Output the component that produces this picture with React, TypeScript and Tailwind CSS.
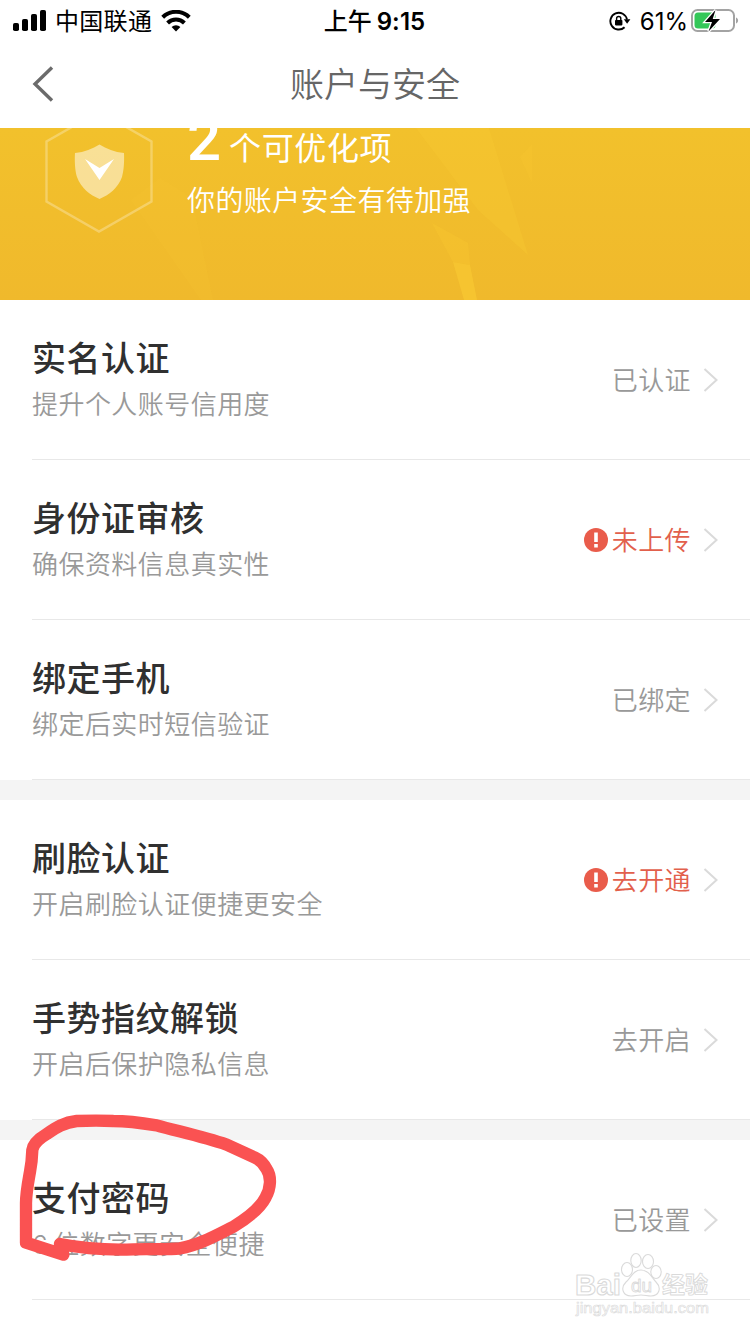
import { clsx } from 'clsx';

const groups = [
  [
    { title: '实名认证', desc: '提升个人账号信用度', status: '已认证', alert: false },
    { title: '身份证审核', desc: '确保资料信息真实性', status: '未上传', alert: true },
    { title: '绑定手机', desc: '绑定后实时短信验证', status: '已绑定', alert: false },
  ],
  [
    { title: '刷脸认证', desc: '开启刷脸认证便捷更安全', status: '去开通', alert: true },
    { title: '手势指纹解锁', desc: '开启后保护隐私信息', status: '去开启', alert: false },
  ],
  [{ title: '支付密码', desc: '6\u2009位数字更安全便捷', status: '已设置', alert: false }],
];

type Item = (typeof groups)[number][number];

function StatusBar() {
  return (
    <div className="grid grid-cols-[1fr_auto_1fr] items-center h-10 pl-[13px] pr-[11px] text-black">
      <div className="flex items-center">
        <svg width="33" height="22" viewBox="0 0 33 22">
          <rect x="0" y="13" width="6" height="8" rx="1.8" />
          <rect x="9" y="9" width="6" height="12" rx="1.8" />
          <rect x="18" y="4" width="6" height="17" rx="1.8" />
          <rect x="27" y="0" width="6" height="21" rx="1.8" />
        </svg>
        <span className="ml-[9px] pt-[2px] text-[24px] leading-10 tracking-[0.3px]">中国联通</span>
        <svg className="ml-[9px]" width="30" height="22" viewBox="0 0 30 22" fill="none" stroke="#000" strokeWidth="4">
          <path d="M1.7 7.2a19 19 0 0 1 26.6 0" />
          <path d="M6.6 13a12 12 0 0 1 16.8 0" />
          <path d="M15 21.6l-4.4-4.5a6.2 6.2 0 0 1 8.8 0z" fill="#000" stroke="none" />
        </svg>
      </div>
      <div className="flex items-center pt-[2px] mr-[3px] text-[24px] leading-10 font-medium">
        <span>上午</span>
        <span className="ml-[5px] font-semibold tracking-[0.1px]">9:15</span>
      </div>
      <div className="flex items-center justify-end">
        <svg width="22" height="20" viewBox="0 0 22 20" fill="none" stroke="#000" strokeWidth="1.9">
          <path d="M15.6 16.2A8.4 8.4 0 1 1 18 8.5" />
          <path d="M14.8 8.2h6.6l-3.3 4.6z" fill="#000" stroke="none" />
          <rect x="6" y="9" width="7.4" height="5.4" rx="0.8" fill="#000" stroke="none" />
          <path d="M7.6 9.4V7.6a2.1 2.1 0 0 1 4.2 0v1.8" strokeWidth="1.4" />
        </svg>
        <span className="ml-[9px] pt-[2px] text-[24px] leading-10">61%</span>
        <svg className="ml-[3px]" width="48" height="24" viewBox="0 0 48 24">
          <rect x="1" y="1" width="42" height="21" rx="5.5" fill="#fff" stroke="#a3a3a3" strokeWidth="2" />
          <path d="M45 8.5c2.8.8 2.8 5.2 0 6z" fill="#a3a3a3" />
          <rect x="3.5" y="3.5" width="21" height="16" rx="3.5" fill="#34c759" />
          <path d="M24.5 1L14 13h7l-3.500 9.500L29 10h-7.300z" fill="#000" stroke="#fff" strokeWidth="2.6" paintOrder="stroke" />
        </svg>
      </div>
    </div>
  );
}

function Banner() {
  return (
    <section className="relative h-[172px] overflow-hidden bg-linear-to-b from-[#f2c12c] to-[#f0b92c] text-white">
      <svg className="absolute inset-0" width="750" height="172" viewBox="0 0 750 172">
        <path d="M416 0h73l39 127-50-45z" fill="#f7c732" opacity="0.4" />
        <path d="M532 16v39l-12-26z" fill="#f7c732" opacity="0.3" />
        <path d="M432 95l36 20 2 22-17-3z" fill="#f9c932" opacity="0.35" />
        <path d="M453 134l17 3 7 35h-13z" fill="#f9c932" opacity="0.65" />
        <path d="M160 50l32 20 21 102h-12l-70-100z" fill="#f7c530" opacity="0.22" />
      </svg>
      <div className="relative flex">
        <svg className="ml-[44px] -mt-[18px]" width="110" height="124" viewBox="0 0 110 124">
          <path d="M55 1.5l52.5 30v60L55 121.5 2.5 91.500v-60z" fill="none" stroke="#fff" strokeOpacity="0.28" strokeWidth="2.4" />
          <path d="M55.500 34.500c7 4.500 15 7.500 24.500 8.500 0 0 1 14-2 24-4 11-13 18-22.500 22-9.500-4-18.500-11-22.500-22-3-10-2-24-2-24 9.500-1 17.500-4 24.500-8.500z" fill="#fff" fillOpacity="0.5" />
          <path d="M41 49l14.500 9L70 49 55.500 70z" fill="#fff" />
        </svg>
        <div className="ml-[33px] -mt-[28px]">
          <div className="flex items-baseline h-[80px]">
            <span className="text-[60px] leading-[80px] font-medium [font-family:Roboto,sans-serif]">2</span>
            <span className="ml-[8px] text-[32px] font-normal tracking-[0.6px]">个可优化项</span>
          </div>
          <p className="mt-px text-[28px] leading-[40px] tracking-[0.4px] font-[350]">你的账户安全有待加强</p>
        </div>
      </div>
    </section>
  );
}

function Row({ item }: { item: Item }) {
  return (
    <li className="ml-8 h-40 pr-8 flex items-center justify-between border-b border-[#e8e8e8]">
      <div className="pt-px">
        <h2 className="text-[34px] leading-[50px] tracking-[0.5px] font-medium text-[#303030]">{item.title}</h2>
        <p className="text-[26px] leading-[42px] tracking-[0.45px] font-[350] text-[#999]">{item.desc}</p>
      </div>
      <div className="flex items-center">
        {item.alert && (
          <svg className="mr-[4px]" width="24" height="24" viewBox="0 0 24 24">
            <circle cx="12" cy="12" r="12" fill="#e95c4b" />
            <path d="M10.200 4.500h3.600v9.500h-3.600zM10.200 16h3.600v3.400h-3.600z" fill="#fff" />
          </svg>
        )}
        <span
          className={clsx(
            'pt-[2px] text-[26px] leading-10 tracking-[0.4px] font-[350]',
            item.alert ? 'text-[#e2604c]' : 'text-[#999]'
          )}
        >
          {item.status}
        </span>
        <svg className="ml-[12px]" width="15" height="24" viewBox="0 0 15 24" fill="none" stroke="#dadada" strokeWidth="2">
          <path d="M1.500 1l12 11-12 11" />
        </svg>
      </div>
    </li>
  );
}

function Watermark() {
  return (
    <svg className="absolute left-[570px] top-[1248px]" width="150" height="76" viewBox="0 0 150 76" fill="#fff" stroke="#dadada" strokeWidth="1.100" strokeLinejoin="round">
      <g fontFamily="'Liberation Sans', 'Noto Sans CJK SC', sans-serif" fontWeight="700">
        <text x="5" y="47" fontSize="30" textLength="46" lengthAdjust="spacingAndGlyphs">Bai</text>
        <ellipse cx="57" cy="21.500" rx="5.500" ry="7" />
        <ellipse cx="66" cy="12.500" rx="5.200" ry="7" />
        <ellipse cx="78" cy="13.500" rx="5.500" ry="7" />
        <ellipse cx="86" cy="24" rx="5.200" ry="6.500" />
        <path d="M71 22c8 0 11 8 15 12 6 6 3 14-5 14-4 0-6-1-10-1s-6 1-10 1c-8 0-11-8-5-14 5-4 7-12 15-12z" />
        <text x="61" y="44" fontSize="19" strokeWidth="0.900" fontWeight="400" textLength="21">du</text>
        <text x="92" y="45" fontSize="23" strokeWidth="0.900" textLength="46">经验</text>
        <text x="6" y="65" fontSize="15" strokeWidth="0.600" fontWeight="400" textLength="133" lengthAdjust="spacingAndGlyphs">jingyan.baidu.com</text>
      </g>
    </svg>
  );
}

export default function App() {
  return (
    <div className="relative w-[750px] h-[1334px] overflow-hidden bg-white [font-family:Inter,'Noto_Sans_CJK_SC',sans-serif]">
      <StatusBar />
      <header className="grid grid-cols-[1fr_auto_1fr] items-center h-[88px] px-8">
        <svg width="22" height="36" viewBox="0 0 22 36" fill="none" stroke="#6b6b6b" strokeWidth="3.400">
          <path d="M20 1.500L3 18l17 16.500" />
        </svg>
        <h1 className="pt-px text-[34px] leading-[50px] font-[350] text-[#666]">账户与安全</h1>
      </header>
      <Banner />
      <main className="flex flex-col gap-5 bg-[#f4f4f4]">
        {groups.map((items) => (
          <ul key={items[0].title} className="bg-white">
            {items.map((item) => (
              <Row key={item.title} item={item} />
            ))}
          </ul>
        ))}
      </main>

      {/* Hand-drawn marker around the payment password row */}
      <svg className="absolute left-0 top-[1100px]" width="300" height="210" viewBox="0 0 900 630" fill="none" stroke="#fa5252" strokeWidth="37" strokeLinecap="round" strokeLinejoin="round">
        <path d="M180 432C250 446 340 450 400 448C450 446 500 450 540 445C600 434 650 405 700 380C750 350 780 325 797 292C812 265 815 230 800 208C792 192 780 180 765 173L680 134C610 110 530 93 470 76C420 68 380 63 340 63C300 61 255 62 230 63C190 67 165 85 140 102C110 120 99 135 97 150C96 180 95 190 90 215C82 260 78 280 78 310L78 428L190 464L180 432" />
      </svg>
      <Watermark />
    </div>
  );
}
